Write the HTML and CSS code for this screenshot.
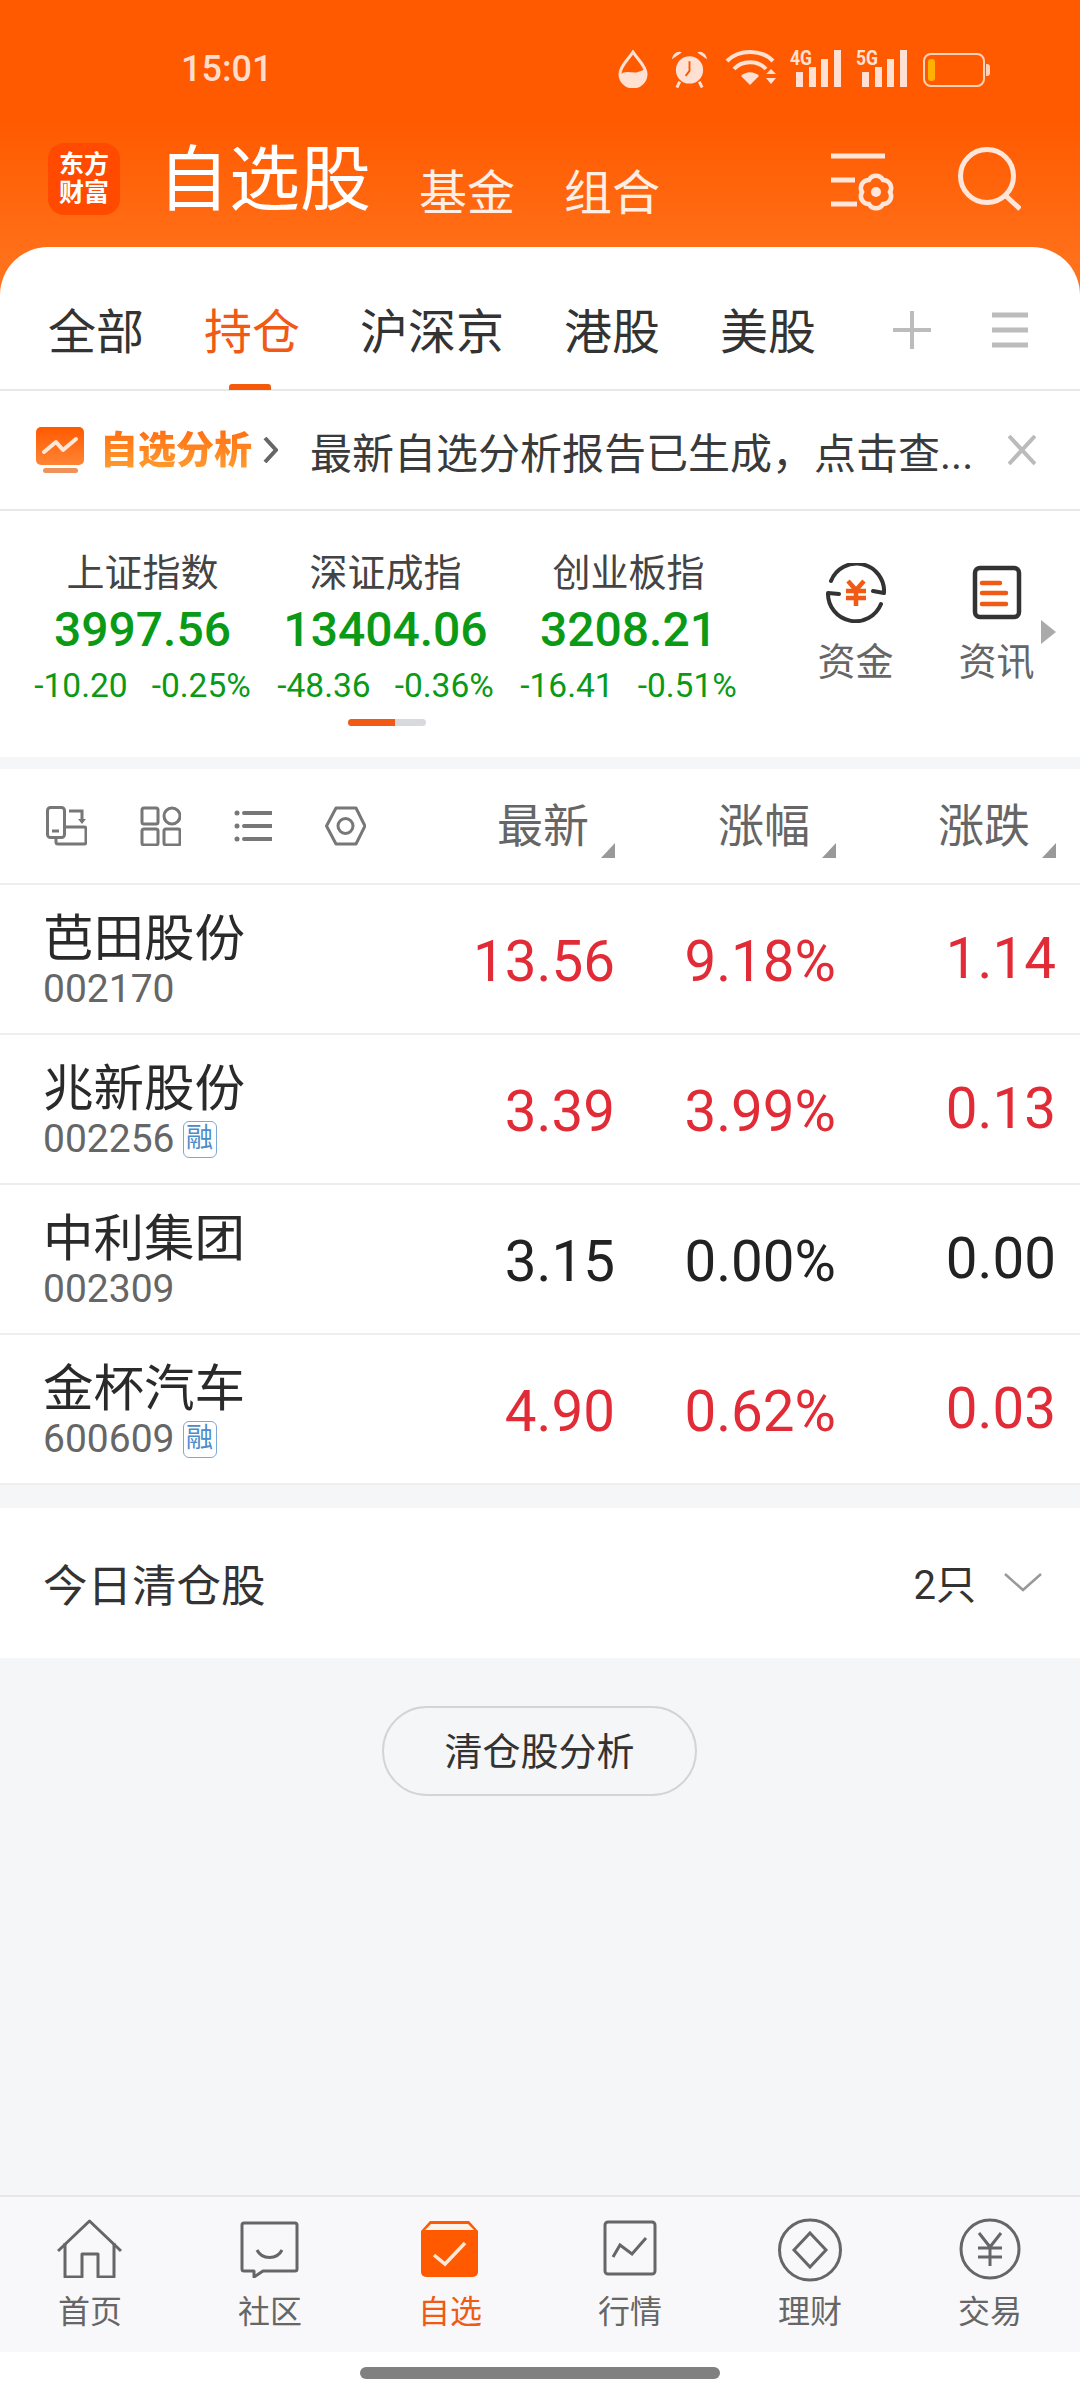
FILE: index.html
```html
<!DOCTYPE html>
<html lang="zh-CN">
<head>
    <meta charset="UTF-8">
    <title>自选股</title>
    <link rel="stylesheet" href="styles.css">
</head>
<body>
<div class="screen">
    <div class="top">
        <div class="status">
            <span class="time">15:01</span>
            <div class="status-icons">
                <svg class="si-drop" width="30" height="38" viewBox="0 0 30 38"><path d="M15 2 C10 10 2 16 2 24 A13 13 0 0 0 28 24 C28 16 20 10 15 2Z" fill="none" stroke="#ffe0d2" stroke-width="3"/><path d="M2 25 C8 19 14 24 20 22 C24 21 26 19 28 20 C30 30 24 37 15 37 C6 37 1 32 2 25Z" fill="#ffe0d2"/></svg>
                <svg class="si-alarm" width="37" height="39" viewBox="0 0 38 39"><circle cx="19" cy="20" r="14" fill="#ffe0d2"/><path d="M19 11V21L15 26" fill="none" stroke="#ff5a00" stroke-width="2"/><path d="M1 9C2 3 7 0 11 2ZM37 9C36 3 31 0 27 2Z" fill="#ffe0d2"/><path d="M9 32L6 38M29 32L32 38" stroke="#ffe0d2" stroke-width="3"/></svg>
                <svg class="si-wifi" width="52" height="36" viewBox="0 0 52 36"><g fill="none" stroke="#ffe0d2" stroke-width="4"><path d="M2 11C14 -1 36 -1 48 11"/><path d="M9 19C17 10 33 10 41 19"/></g><path d="M16 26C21 21 29 21 34 26L25 35Z" fill="#ffe0d2"/><path d="M41 24L46 19L51 24ZM41 28L46 34L51 28Z" fill="#ffe0d2"/></svg>
                <svg class="si-net" width="51" height="43" viewBox="0 -6 51 43"><text x="0" y="15" class="net-label" textLength="22" lengthAdjust="spacingAndGlyphs">4G</text><path d="M6 22h7v15h-7zM19 17h7v20h-7zM31 9h7v28h-7zM44 0h7v37h-7z" fill="#ffe0d2"/></svg>
                <svg class="si-net si-net2" width="51" height="43" viewBox="0 -6 51 43"><text x="0" y="15" class="net-label" textLength="22" lengthAdjust="spacingAndGlyphs">5G</text><path d="M6 22h7v15h-7zM19 17h7v20h-7zM31 9h7v28h-7zM44 0h7v37h-7z" fill="#ffe0d2"/></svg>
                <svg class="si-batt" width="67" height="34" viewBox="0 0 67 34"><rect x="1" y="1" width="60" height="32" rx="7" fill="none" stroke="#ffd2b8" stroke-width="2"/><path d="M63 11h1a3 3 0 0 1 3 3v6a3 3 0 0 1-3 3h-1z" fill="#ffd2b8"/><rect x="5" y="6" width="7" height="22" rx="3" fill="#ffb000"/></svg>
            </div>
        </div>
        <div class="header">
            <div class="logo"><span>东方</span><span>财富</span></div>
            <div class="nav">
                <span class="nav-title">自选股</span>
                <span class="nav-link">基金</span>
                <span class="nav-link">组合</span>
            </div>
            <div class="header-icons">
                <svg width="66" height="58" viewBox="0 0 66 58"><g stroke="#ffe6da" stroke-width="5"><path d="M0 3H54M0 27H24M0 51H26"/></g><path transform="translate(45 39)" d="M14 0A8 8 0 0 1 7 12.1A8 8 0 0 1 -7 12.1A8 8 0 0 1 -14 0A8 8 0 0 1 -7 -12.1A8 8 0 0 1 7 -12.1A8 8 0 0 1 14 0Z" fill="none" stroke="#ffe6da" stroke-width="4.5"/><circle cx="45" cy="39" r="5" fill="#ffe6da"/></svg>
                <svg class="search-icon" width="64" height="64" viewBox="0 0 64 64"><circle cx="30" cy="29" r="26.5" fill="none" stroke="#ffe6da" stroke-width="5"/><path d="M49 49L63 62" stroke="#ffe6da" stroke-width="5"/></svg>
            </div>
        </div>
        <div class="tabs">
            <span class="tab">全部</span>
            <span class="tab active">持仓</span>
            <span class="tab">沪深京</span>
            <span class="tab">港股</span>
            <span class="tab">美股</span>
            <svg class="tab-plus" width="38" height="38" viewBox="0 0 38 38"><path d="M19 0V38M0 19H38" stroke="#bcbcbc" stroke-width="4"/></svg>
            <svg class="tab-menu" width="36" height="36" viewBox="0 0 36 36"><path d="M0 3H36M0 18H36M0 33H36" stroke="#bcbcbc" stroke-width="5"/></svg>
        </div>
    </div>

    <div class="banner">
        <svg class="banner-icon" width="48" height="46" viewBox="0 0 48 46"><defs><linearGradient id="bg1" x1="0" y1="0" x2="0" y2="1"><stop offset="0" stop-color="#ff5a00"/><stop offset="1" stop-color="#ff8434"/></linearGradient></defs><rect width="48" height="38" rx="5" fill="url(#bg1)"/><path d="M8 25L20 15L27 23L40 12" fill="none" stroke="#ffe8d8" stroke-width="4" stroke-linecap="round" stroke-linejoin="round"/><rect x="7" y="41" width="35" height="5" rx="2.5" fill="#f0935a"/></svg>
        <span class="banner-tag">自选分析</span>
        <svg class="banner-chevron" width="15" height="26" viewBox="0 0 15 26"><path d="M2 1L13 13L2 25" fill="none" stroke="#666" stroke-width="4"/></svg>
        <span class="banner-text">最新自选分析报告已生成，点击查...</span>
        <svg width="28" height="30" viewBox="0 0 28 30"><path d="M1 1L27 29M27 1L1 29" stroke="#bbb" stroke-width="4"/></svg>
    </div>

    <div class="market">
        <div class="market-row">
            <div class="index">
                <div class="index-name">上证指数</div>
                <div class="index-value">3997.56</div>
                <div class="index-change"><span>-10.20</span><span>-0.25%</span></div>
            </div>
            <div class="index">
                <div class="index-name">深证成指</div>
                <div class="index-value">13404.06</div>
                <div class="index-change"><span>-48.36</span><span>-0.36%</span></div>
            </div>
            <div class="index">
                <div class="index-name">创业板指</div>
                <div class="index-value">3208.21</div>
                <div class="index-change"><span>-16.41</span><span>-0.51%</span></div>
            </div>
            <div class="tool">
                <svg width="60" height="60" viewBox="0 0 60 60"><path d="M5 18A27.5 27.5 0 0 1 58 30L47 28M55 41A27.5 27.5 0 0 1 2 30L13 31" fill="none" stroke="#333" stroke-width="4" stroke-linecap="round" stroke-linejoin="round"/><path d="M22 18L30 27L38 18M20 28H40M20 35H40M30 27V43" fill="none" stroke="#f05a14" stroke-width="4.5"/></svg>
                <span>资金</span>
            </div>
            <div class="tool">
                <svg width="60" height="60" viewBox="0 0 60 60"><rect x="8" y="5" width="44" height="49" rx="5" fill="none" stroke="#333" stroke-width="4.5"/><path d="M15 20H33M15 30H39M15 41H39" stroke="#f05a14" stroke-width="4.5" stroke-linecap="round"/></svg>
                <span>资讯</span>
            </div>
            <i class="market-arrow"></i>
        </div>
        <div class="market-scroll"><i></i></div>
    </div>

    <div class="list-head">
        <div class="list-tools">
            <svg width="41" height="40" viewBox="0 0 41 40"><g fill="none" stroke="#777" stroke-width="3"><rect x="1.5" y="1.5" width="17" height="30" rx="3"/><path d="M6 25H13"/><path d="M19 21H38A2 2 0 0 1 40 23V36A2 2 0 0 1 38 38H12A2 2 0 0 1 10 36V32"/><path d="M23 5H36V16"/></g><path d="M32 13L36 18L40 13Z" fill="#777"/></svg>
            <svg width="41" height="40" viewBox="0 0 41 40"><g fill="none" stroke="#777" stroke-width="3"><rect x="2" y="2" width="16" height="16" rx="2"/><circle cx="32" cy="10" r="8"/><rect x="2" y="23" width="16" height="16" rx="2"/><rect x="24" y="23" width="16" height="16" rx="2"/></g></svg>
            <svg width="38" height="38" viewBox="0 0 38 38"><path d="M10 6H38M10 19H38M10 32H38" stroke="#777" stroke-width="4" stroke-linecap="round"/><circle cx="3" cy="6" r="2.5" fill="#777"/><circle cx="3" cy="19" r="2.5" fill="#777"/><circle cx="3" cy="32" r="2.5" fill="#777"/></svg>
            <svg width="41" height="40" viewBox="0 0 41 40"><path d="M1.5 20L11 2H31L40 20L31 38H11Z" fill="none" stroke="#777" stroke-width="3" stroke-linejoin="round"/><circle cx="20.5" cy="20" r="7.5" fill="none" stroke="#777" stroke-width="3"/></svg>
        </div>
        <div class="sort">最新<i></i></div>
        <div class="sort">涨幅<i></i></div>
        <div class="sort">涨跌<i></i></div>
    </div>

    <div class="stock">
        <div><div class="stock-name">芭田股份</div><div class="stock-code">002170</div></div>
        <div class="num up">13.56</div><div class="num up">9.18%</div><div class="num last up">1.14</div>
    </div>
    <div class="stock">
        <div><div class="stock-name">兆新股份</div><div class="stock-code">002256<span class="rong">融</span></div></div>
        <div class="num up">3.39</div><div class="num up">3.99%</div><div class="num last up">0.13</div>
    </div>
    <div class="stock">
        <div><div class="stock-name">中利集团</div><div class="stock-code">002309</div></div>
        <div class="num">3.15</div><div class="num">0.00%</div><div class="num last">0.00</div>
    </div>
    <div class="stock">
        <div><div class="stock-name">金杯汽车</div><div class="stock-code">600609<span class="rong">融</span></div></div>
        <div class="num up">4.90</div><div class="num up">0.62%</div><div class="num last up">0.03</div>
    </div>

    <div class="cleared">
        <span class="cleared-title">今日清仓股</span>
        <span class="cleared-count">2只</span>
        <svg width="38" height="20" viewBox="0 0 38 20"><path d="M1 2L19 18L37 2" fill="none" stroke="#999" stroke-width="2.5"/></svg>
    </div>

    <div class="empty">
        <div class="cleared-btn">清仓股分析</div>
    </div>

    <div class="bottom-nav">
        <div class="nav-item">
            <svg width="66" height="60" viewBox="0 0 66 60"><g fill="none" stroke="#666" stroke-width="3" stroke-linejoin="round"><path d="M1 33L32.5 3L64 33"/><path d="M8 25V59H25V36H41V59H57V25"/></g></svg>
            <span>首页</span>
        </div>
        <div class="nav-item">
            <svg width="60" height="60" viewBox="0 0 60 60"><path d="M4 5H55A2 2 0 0 1 57 7V51A2 2 0 0 1 55 53H23L14 59V53H4A2 2 0 0 1 2 51V7A2 2 0 0 1 4 5Z" fill="none" stroke="#666" stroke-width="3" stroke-linejoin="round"/><path d="M17 32C22 42 37 42 42 32" fill="none" stroke="#666" stroke-width="3"/></svg>
            <span>社区</span>
        </div>
        <div class="nav-item active">
            <svg width="60" height="60" viewBox="0 0 60 60"><path d="M10 3H49L58 13V54A5 5 0 0 1 53 59H6A5 5 0 0 1 1 54V13Z" fill="#ff5a00"/><path d="M11 6H48L54 12H5Z" fill="#fbf2ec"/><path d="M14 37L25 46L45 25" fill="none" stroke="#ffe8d8" stroke-width="3.5"/></svg>
            <span>自选</span>
        </div>
        <div class="nav-item">
            <svg width="60" height="60" viewBox="0 0 60 60"><rect x="5" y="4" width="50" height="52" rx="3" fill="none" stroke="#666" stroke-width="3"/><path d="M13 39L20 27L32 36L46 20" fill="none" stroke="#666" stroke-width="3"/></svg>
            <span>行情</span>
        </div>
        <div class="nav-item">
            <svg width="66" height="64" viewBox="0 0 66 64"><ellipse cx="33" cy="32" rx="30.5" ry="30" fill="none" stroke="#666" stroke-width="3"/><path d="M33 15L49 32L33 49L17 32Z" fill="none" stroke="#666" stroke-width="3"/></svg>
            <span>理财</span>
        </div>
        <div class="nav-item">
            <svg width="62" height="62" viewBox="0 0 62 62"><circle cx="31" cy="31" r="29" fill="none" stroke="#666" stroke-width="3"/><path d="M20 15L31 29L42 15M19 30H43M19 39H43M31 29V48" fill="none" stroke="#666" stroke-width="3"/></svg>
            <span>交易</span>
        </div>
    </div>
    <div class="home-bar"><i></i></div>
</div>
</body>
</html>
```

FILE: styles.css
```css
* {
    box-sizing: border-box;
}
body {
    margin: 0;
    font-family: Roboto, "Noto Sans CJK SC", sans-serif;
    color: #333;
}
svg {
    display: block;
    flex: none;
}
.screen {
    width: 1080px;
    height: 2400px;
    display: flex;
    flex-direction: column;
    overflow: hidden;
    background: #f5f6f8;
}

/* top orange block */
.top {
    background: linear-gradient(#ff5a00 0, #ff5a00 120px, #ff7620 295px);
}
.status {
    height: 128px;
    padding: 50px 0 0 181px;
    display: flex;
    justify-content: space-between;
}
.time {
    font-size: 36px;
    font-weight: 500;
    line-height: 38px;
    color: #ffdccc;
}
.status-icons {
    display: flex;
    align-items: flex-start;
    padding-right: 90px;
    height: 38px;
}
.si-alarm {
    margin-left: 23px;
}
.si-wifi {
    margin-left: 17px;
}
.si-net {
    margin-left: 13px;
    margin-top: -6px;
}
.si-net2 {
    margin-left: 15px;
}
.si-batt {
    margin-left: 16px;
    margin-top: 3px;
}
.net-label {
    font-family: Roboto, sans-serif;
    font-size: 20px;
    font-weight: 700;
    fill: #ffe0d2;
}
.header {
    height: 119px;
    padding: 15px 59px 0 48px;
    display: flex;
    align-items: flex-start;
}
.logo {
    width: 72px;
    height: 72px;
    border-radius: 16px;
    background: #ff4a00;
    display: flex;
    flex-direction: column;
    align-items: center;
    justify-content: center;
    color: #fff;
    font-size: 25px;
    font-weight: 700;
    line-height: 28px;
}
.nav {
    display: flex;
    align-items: flex-start;
    margin-left: 38px;
    color: #fff;
    margin-top: -5px;
}
.nav-title {
    font-size: 71px;
    line-height: 84px;
    margin-right: 48px;
}
.nav-link {
    font-size: 48px;
    line-height: 60px;
    margin-top: 26px;
    margin-right: 49px;
    color: #ffeee4;
}
.header-icons {
    margin-left: auto;
    display: flex;
    align-items: flex-start;
    gap: 60px;
    padding-top: 10px;
}
.search-icon {
    margin-top: -6px;
}
.tabs {
    height: 144px;
    padding: 24px 54px 0 48px;
    background: #fff;
    border-radius: 48px 48px 0 0;
    border-bottom: 2px solid #e8e8e8;
    display: flex;
    align-items: center;
    gap: 60px;
    font-size: 48px;
    color: #333;
}
.tab {
    position: relative;
    flex: none;
    line-height: 66px;
    margin-top: 6px;
}
.tab.active {
    color: #f05a14;
}
.tab.active::after {
    content: "";
    position: absolute;
    left: 25px;
    bottom: -24px;
    width: 42px;
    height: 6px;
    border-radius: 3px 3px 0 0;
    background: #f55a0a;
}
.tab-plus {
    margin-left: 17px;
}
.tab-menu {
    margin-left: 1px;
}

/* analysis banner */
.banner {
    height: 120px;
    background: #fff;
    border-bottom: 2px solid #e8e8e8;
    padding: 0 44px 0 36px;
    display: flex;
    align-items: center;
}
.banner-tag {
    margin-left: 16px;
    font-size: 38px;
    font-weight: 900;
    line-height: 50px;
    background: linear-gradient(#ff6a10, #ffa232);
    -webkit-background-clip: text;
    background-clip: text;
    color: transparent;
}
.banner-chevron {
    margin-left: 11px;
}
.banner-text {
    margin-left: 32px;
    font-size: 42px;
    color: #3a3a3a;
    flex: 1;
    white-space: nowrap;
}

/* market indexes */
.market {
    height: 246px;
    background: #fff;
    padding-top: 37px;
}
.market-row {
    position: relative;
    display: flex;
    padding-left: 21px;
}
.index {
    width: 243px;
    text-align: center;
}
.index-name {
    font-size: 38px;
    line-height: 50px;
    color: #444;
}
.index-value {
    font-size: 48px;
    font-weight: 500;
    line-height: 62px;
    margin-top: 1px;
    color: #0a9a16;
}
.index-change {
    display: flex;
    justify-content: center;
    gap: 24px;
    font-size: 33.5px;
    line-height: 46px;
    margin-top: 2px;
    color: #0a9a16;
}
.tool {
    width: 141px;
    display: flex;
    flex-direction: column;
    align-items: center;
    font-size: 38px;
    line-height: 50px;
    color: #666;
    padding-top: 15px;
}
.index + .tool {
    margin-left: 35px;
}
.tool span {
    margin-top: 14px;
}
.market-arrow {
    position: absolute;
    left: 1041px;
    top: 72px;
    width: 15px;
    height: 24px;
    background: #aaa;
    clip-path: polygon(0 0, 100% 50%, 0 100%);
}
.market-scroll {
    width: 78px;
    height: 7px;
    margin: 10px 0 0 348px;
    border-radius: 4px;
    background: #d8d9dc;
    overflow: hidden;
}
.market-scroll i {
    display: block;
    width: 47px;
    height: 7px;
    background: #f05a14;
}

/* stock list */
.list-head {
    margin-top: 12px;
    height: 116px;
    background: #fff;
    padding-right: 24px;
    display: grid;
    grid-template-columns: 344px 271px 221px 220px;
    align-items: center;
    border-bottom: 2px solid #eee;
}
.list-tools {
    padding-left: 46px;
    display: flex;
    align-items: center;
    gap: 53px;
}
.sort {
    position: relative;
    padding-right: 26px;
    text-align: right;
    font-size: 46px;
    line-height: 60px;
    color: #666;
}
.sort i {
    position: absolute;
    right: 0;
    bottom: -2px;
    width: 14px;
    height: 15px;
    background: #999;
    clip-path: polygon(100% 0, 100% 100%, 0 100%);
}
.stock {
    height: 150px;
    background: #fff;
    padding: 0 24px 0 43px;
    border-bottom: 2px solid #eee;
    display: grid;
    grid-template-columns: 301px 271px 221px 220px;
    align-items: center;
}
.stock-name {
    font-size: 50.5px;
    line-height: 57px;
    margin-top: 3px;
    color: #2a2a2a;
}
.stock-code {
    display: flex;
    align-items: center;
    font-size: 39px;
    line-height: 44px;
    color: #666;
}
.rong {
    width: 34px;
    height: 37px;
    margin-left: 8px;
    border: 1.5px solid #7ba9d6;
    border-radius: 6px;
    font-size: 27px;
    line-height: 33px;
    text-align: center;
    color: #4a8ccb;
}
.num {
    font-size: 56.5px;
    line-height: 70px;
    padding-top: 6px;
    text-align: right;
    color: #222;
}
.num.up {
    color: #e12b36;
}
.num.last {
    padding: 0;
}
.cleared {
    margin-top: 23px;
    height: 150px;
    background: #fff;
    padding: 0 38px 2px 43px;
    display: flex;
    align-items: center;
}
.cleared-title {
    font-size: 44.5px;
    color: #333;
    flex: 1;
}
.cleared-count {
    font-size: 40px;
    color: #333;
    margin-right: 28px;
}
.empty {
    flex: 1;
    padding-top: 48px;
}
.cleared-btn {
    width: 315px;
    height: 90px;
    margin-left: 382px;
    border: 2px solid #d4d4d6;
    border-radius: 45px;
    font-size: 38px;
    line-height: 88px;
    text-align: center;
    color: #333;
}

/* bottom bar */
.bottom-nav {
    height: 157px;
    background: #f8f8fa;
    border-top: 2px solid #e6e6e8;
    display: flex;
}
.nav-item {
    width: 180px;
    height: 155px;
    padding: 21px 0 20px;
    display: flex;
    flex-direction: column;
    align-items: center;
    font-size: 32px;
    line-height: 40px;
    color: #666;
}
.nav-item span {
    margin-top: auto;
}
.nav-item.active {
    color: #f05a14;
}
.home-bar {
    height: 48px;
    background: #fff;
    padding-top: 15px;
}
.home-bar i {
    display: block;
    width: 360px;
    height: 12px;
    margin: 0 auto;
    border-radius: 6px;
    background: #808080;
}
```
